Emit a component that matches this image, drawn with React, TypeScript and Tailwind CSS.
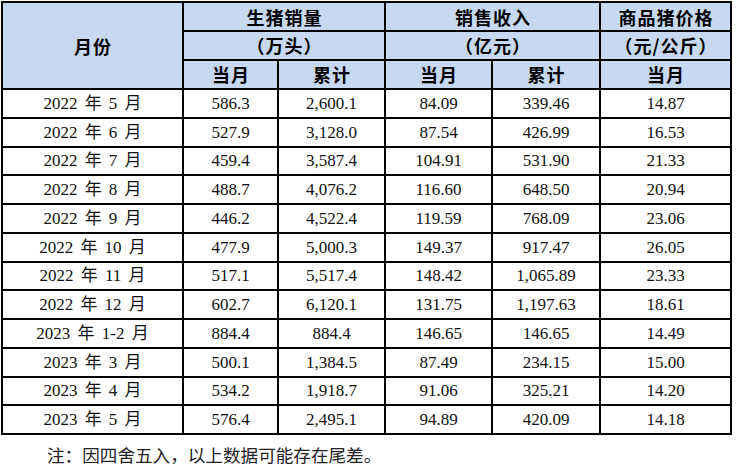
import React from "react";

const rows: [string, string, string, string, string, string][] = [
  ["2022 年 5 月", "586.3", "2,600.1", "84.09", "339.46", "14.87"],
  ["2022 年 6 月", "527.9", "3,128.0", "87.54", "426.99", "16.53"],
  ["2022 年 7 月", "459.4", "3,587.4", "104.91", "531.90", "21.33"],
  ["2022 年 8 月", "488.7", "4,076.2", "116.60", "648.50", "20.94"],
  ["2022 年 9 月", "446.2", "4,522.4", "119.59", "768.09", "23.06"],
  ["2022 年 10 月", "477.9", "5,000.3", "149.37", "917.47", "26.05"],
  ["2022 年 11 月", "517.1", "5,517.4", "148.42", "1,065.89", "23.33"],
  ["2022 年 12 月", "602.7", "6,120.1", "131.75", "1,197.63", "18.61"],
  ["2023 年 1-2 月", "884.4", "884.4", "146.65", "146.65", "14.49"],
  ["2023 年 3 月", "500.1", "1,384.5", "87.49", "234.15", "15.00"],
  ["2023 年 4 月", "534.2", "1,918.7", "91.06", "325.21", "14.20"],
  ["2023 年 5 月", "576.4", "2,495.1", "94.89", "420.09", "14.18"],
];

const th =
  "border-2 border-black bg-[#c6d9f1] text-center align-middle p-0 pl-px font-bold text-[18px] tracking-[1px] leading-none text-black";
const td = "border-2 border-black text-center align-middle p-0 text-[17px] leading-none text-[#111]";

export default function App() {
  return (
    <div className="w-[737px] h-[471px] bg-white overflow-hidden pt-px pl-px">
      <table
        className="border-collapse table-fixed w-[729px]"
        style={{ fontFamily: '"Liberation Serif", "Noto Sans CJK SC", serif' }}
      >
        <colgroup>
          <col className="w-[181px]" />
          <col className="w-[95px]" />
          <col className="w-[107px]" />
          <col className="w-[107px]" />
          <col className="w-[108px]" />
          <col className="w-[131px]" />
        </colgroup>
        <thead className="[font-family:'Noto_Sans_CJK_SC',sans-serif]">
          <tr className="h-[29px]">
            <th rowSpan={3} className={th}>月份</th>
            <th colSpan={2} className={th}>生猪销量</th>
            <th colSpan={2} className={th}>销售收入</th>
            <th className={th}>商品猪价格</th>
          </tr>
          <tr className="h-[28.5px]">
            <th colSpan={2} className={th}>（万头）</th>
            <th colSpan={2} className={th}>（亿元）</th>
            <th className={th}>（元/公斤）</th>
          </tr>
          <tr className="h-[29.5px]">
            <th className={th}>当月</th>
            <th className={th}>累计</th>
            <th className={th}>当月</th>
            <th className={th}>累计</th>
            <th className={th}>当月</th>
          </tr>
        </thead>
        <tbody>
          {rows.map((r) => (
            <tr key={r[0]} className="h-[28.75px]">
              {r.map((c, i) => (
                <td key={i} className={i === 0 ? td + " [word-spacing:3px]" : td}>
                  {c}
                </td>
              ))}
            </tr>
          ))}
        </tbody>
      </table>
      <p
        className="mt-[11px] pl-[46px] text-[17.6px] leading-none text-[#222]"
        style={{ fontFamily: '"Noto Sans CJK SC", sans-serif' }}
      >
        注：因四舍五入，以上数据可能存在尾差。
      </p>
    </div>
  );
}
